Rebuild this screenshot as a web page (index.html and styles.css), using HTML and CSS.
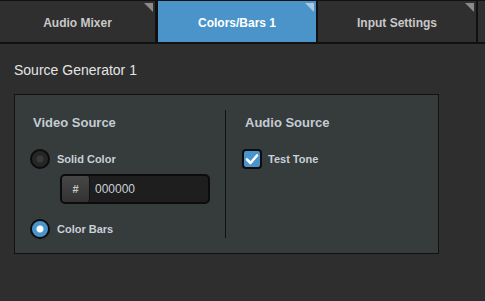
FILE: index.html
```html
<!DOCTYPE html>
<html lang="en">
<head>
  <meta charset="UTF-8" />
  <title>Colors/Bars 1</title>
  <link rel="stylesheet" href="styles.css">
</head>
<body>
  <div class="tabs">
    <div class="tab first">Audio Mixer</div>
    <div class="tab active">Colors/Bars 1</div>
    <div class="tab">Input Settings</div>
    <div class="tab"></div>
  </div>

  <div class="content">
    <h2 class="title">Source Generator 1</h2>

    <div class="panel">
      <div class="col left">
        <h3>Video Source</h3>
        <div class="option">
          <span class="radio"></span>
          <span class="label">Solid Color</span>
        </div>
        <div class="hex">
          <span class="prefix">#</span>
          <span class="value">000000</span>
        </div>
        <div class="option">
          <span class="radio on"></span>
          <span class="label">Color Bars</span>
        </div>
      </div>
      <div class="col right">
        <h3>Audio Source</h3>
        <div class="option">
          <span class="check">
            <svg width="14" height="12" viewBox="0 0 14 12"><path d="M2 6.5 L5.5 10 L12 2.5" fill="none" stroke="#fff" stroke-width="2.6" stroke-linecap="round" stroke-linejoin="round"/></svg>
          </span>
          <span class="label">Test Tone</span>
        </div>
      </div>
    </div>
  </div>
</body>
</html>
```

FILE: styles.css
```css
body { margin: 0; background-color: #2e2e2e; font-family: 'Liberation Sans', Arial, sans-serif; color: #c8d0d8; }

.tabs { display: flex; gap: 2px; background-color: #111; border-top: 1px solid #111; border-bottom: 2px solid #111; height: 41px; overflow: hidden; margin-left: -2px; }
.tab { position: relative; flex: 0 0 158px; padding-top: 2px; box-sizing: border-box; background-color: #2f2f2f; color: #c8c8c8; font-size: 12px; font-weight: bold; display: flex; align-items: center; justify-content: center; }
.tab::after { content: ""; position: absolute; top: 2px; right: 2px; width: 9px; height: 9px; background-color: #8a8a8a; clip-path: polygon(0 0, 100% 0, 100% 100%); }
.tab.first { padding-left: 2px; flex-basis: 157px; margin-right: 1px; }
.tab.active { background-color: #4a94c9; color: #fff; }
.tab.active::after { background-color: #a9c8e2; }

.content { padding: 18px 14px; }
.title { margin: 0; font-size: 14px; font-weight: normal; color: #e4e4e4; line-height: 16px; }

.panel { display: grid; grid-template-columns: 211px 1fr; width: 423px; margin-top: 16px; background-color: #363b3c; border: 1px solid #111; padding: 15px 0; }
.col { height: 128px; }
.col.left { border-right: 1px solid #111; padding-left: 15px; }
.col.right { padding-left: 16px; }
h3 { margin: 5px 0 0 3px; font-size: 13px; line-height: 16px; color: #c4ccd4; }

.option { display: flex; align-items: center; gap: 7px; margin-top: 18px; }
.label { font-size: 11px; font-weight: bold; color: #c8d0d8; }

.radio { width: 16px; height: 16px; border: 2px solid #0c0c0c; border-radius: 50%; background: radial-gradient(circle, #3a3a3a 0 3px, #262626 4px); }
.radio.on { background: radial-gradient(circle, #fff 0 3px, #4a94cc 4px); }

.hex { display: flex; width: 146px; height: 26px; margin: 5px 0 0 30px; border: 2px solid #0c0c0c; border-radius: 5px; background-color: #1e1e1e; }
.prefix { width: 27px; display: flex; align-items: center; justify-content: center; background: linear-gradient(#464646, #333); border-radius: 3px; border-right: 1px solid #111; font-size: 11px; font-weight: bold; color: #c8c8c8; }
.value { display: flex; align-items: center; padding-left: 5px; font-size: 12px; color: #c8d0d8; }

.col.left .option + .hex + .option { margin-top: 15px; }

.check { width: 16px; height: 16px; border: 2px solid #0c0c0c; border-radius: 4px; background-color: #4a94cc; display: flex; align-items: center; justify-content: center; }
.col.right .option { gap: 6px; }
```
